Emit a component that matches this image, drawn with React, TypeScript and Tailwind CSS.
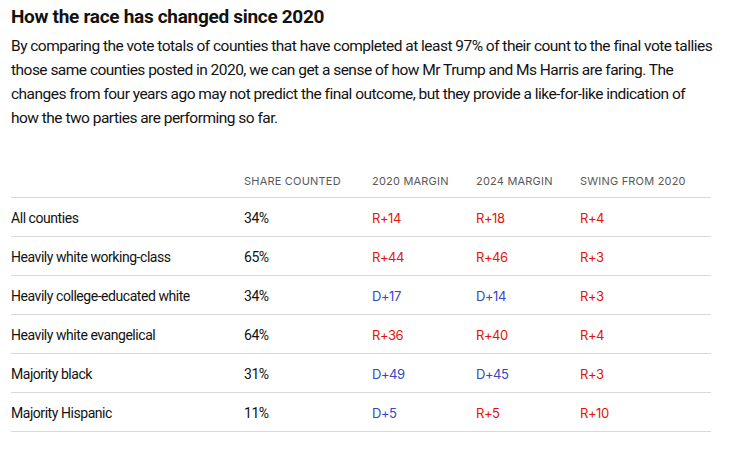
const rows = [
  { label: "All counties", share: "34%", m20: "R+14", m24: "R+18", swing: "R+4" },
  { label: "Heavily white working-class", share: "65%", m20: "R+44", m24: "R+46", swing: "R+3" },
  { label: "Heavily college-educated white", share: "34%", m20: "D+17", m24: "D+14", swing: "R+3" },
  { label: "Heavily white evangelical", share: "64%", m20: "R+36", m24: "R+40", swing: "R+4" },
  { label: "Majority black", share: "31%", m20: "D+49", m24: "D+45", swing: "R+3" },
  { label: "Majority Hispanic", share: "11%", m20: "D+5", m24: "R+5", swing: "R+10" },
];

function Margin({ value }: { value: string }) {
  return (
    <span
      className={`font-['Inter',sans-serif] text-[13px] ${
        value.startsWith("D") ? "text-[#3547c6]" : "text-[#e3120b]"
      }`}
    >
      {value}
    </span>
  );
}

export default function App() {
  return (
    <div className="h-[452px] w-[729px] bg-white px-[11px] pt-[5px] font-['Roboto',sans-serif] text-[#121212]">
      <h2 className="text-[19px] font-bold leading-[24px] tracking-[-0.3px]">
        How the race has changed since 2020
      </h2>
      <p className="mt-[5px] whitespace-nowrap text-[15.5px] leading-[24px] tracking-[-0.52px]">
        By comparing the vote totals of counties that have completed at least 97% of their count to the final vote tallies
        <br />
        those same counties posted in 2020, we can get a sense of how Mr Trump and Ms Harris are faring. The
        <br />
        changes from four years ago may not predict the final outcome, but they provide a like-for-like indication of
        <br />
        how the two parties are performing so far.
      </p>

      {/* Table */}
      <div className="mt-[37px] w-[700px]">
        <div className="grid h-[31px] grid-cols-[233px_128px_104px_104px_1fr] items-center border-b border-[#d9d9d9] pb-[1px] font-['Inter',sans-serif] text-[11px] uppercase tracking-[0.2px] text-[#595959]">
          <span />
          <span>Share counted</span>
          <span>2020 margin</span>
          <span>2024 margin</span>
          <span>Swing from 2020</span>
        </div>
        {rows.map((r) => (
          <div
            key={r.label}
            className="grid h-[39px] grid-cols-[233px_128px_104px_104px_1fr] items-center border-b border-[#d9d9d9] pt-[3px] text-[14px] tracking-[-0.45px]"
          >
            <span>{r.label}</span>
            <span>{r.share}</span>
            <Margin value={r.m20} />
            <Margin value={r.m24} />
            <Margin value={r.swing} />
          </div>
        ))}
      </div>
    </div>
  );
}
